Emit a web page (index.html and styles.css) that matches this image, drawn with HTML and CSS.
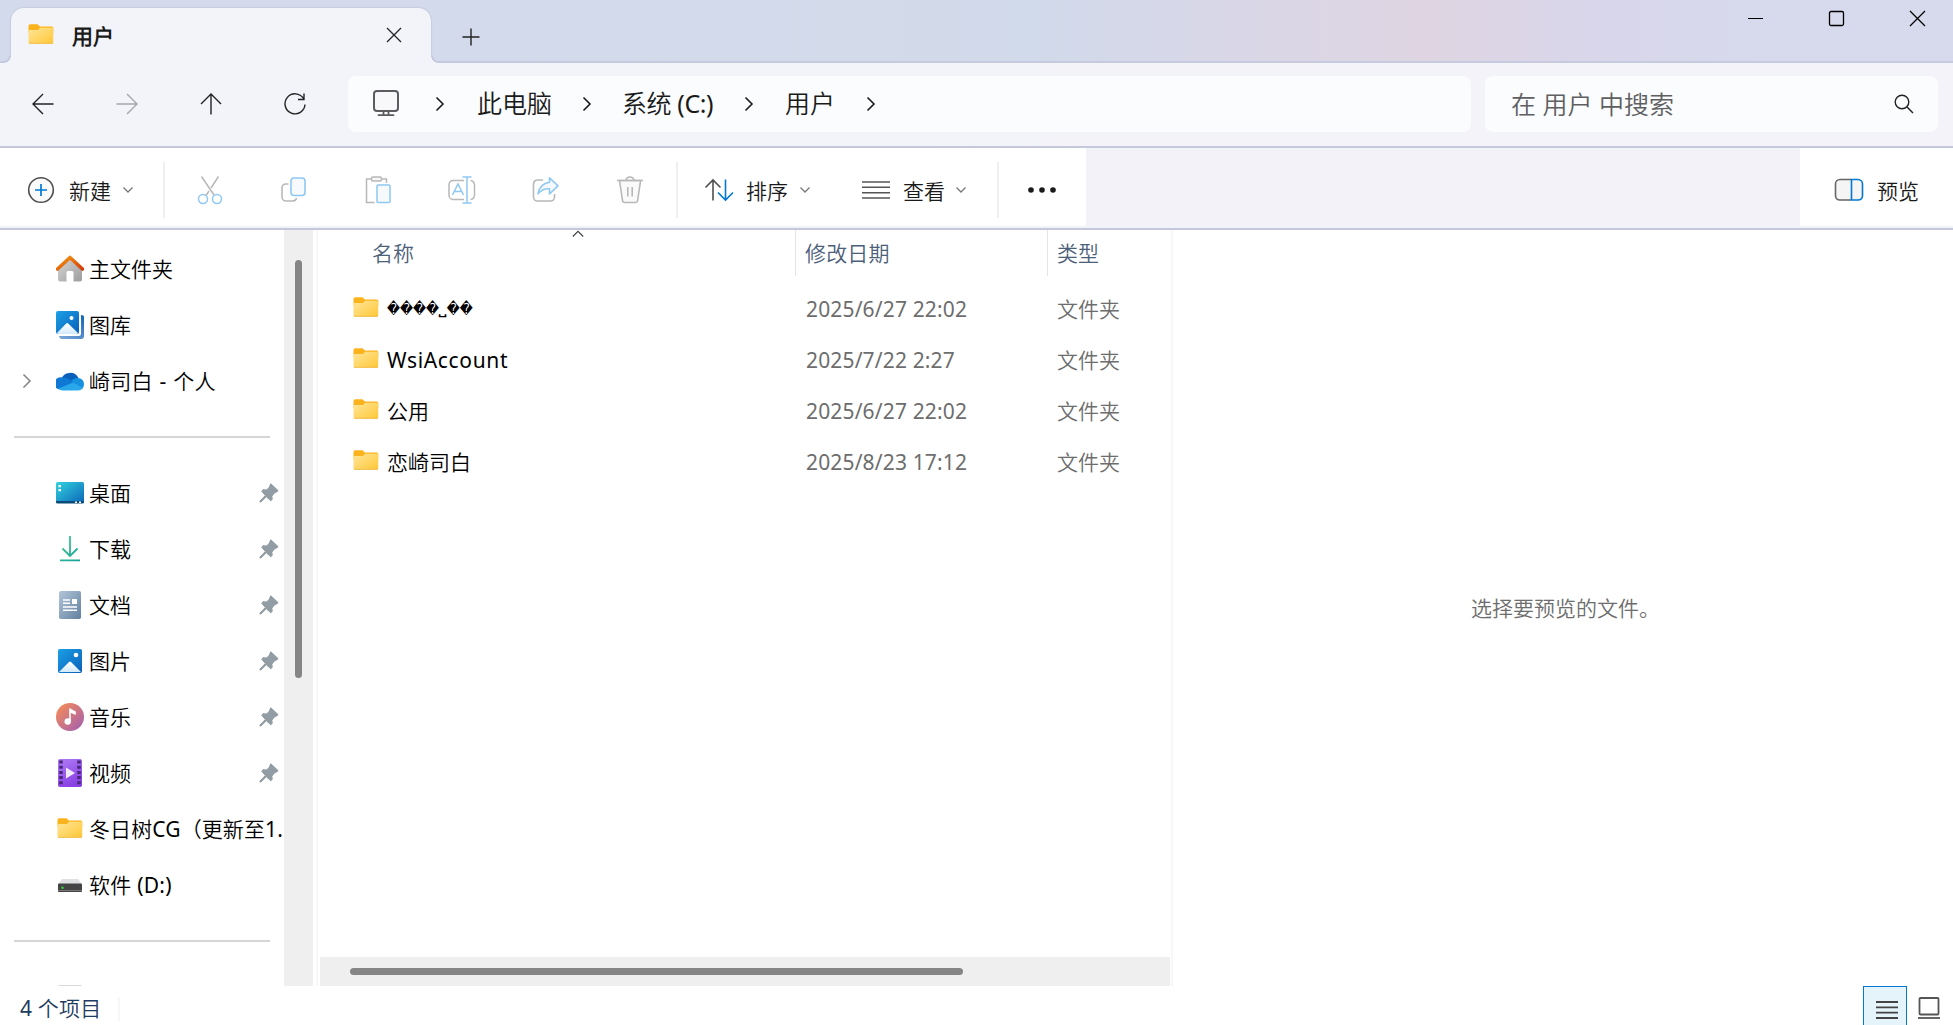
FILE: index.html
```html
<!DOCTYPE html>
<html lang="zh-CN">
<head>
    <meta charset="UTF-8">
    <meta name="viewport" content="width=device-width, initial-scale=1.0">
    <title>用户</title>
    <link rel="stylesheet" href="styles.css">
</head>
<body>
    <!-- Shared icons -->
    <svg class="defs" width="0" height="0">
        <defs>
            <linearGradient id="g-folder" x1="0" y1="0" x2="1" y2="1">
                <stop offset="0" stop-color="#ffe69a"/><stop offset="1" stop-color="#ffc736"/>
            </linearGradient>
            <linearGradient id="g-roof" x1="0" y1="0" x2="1" y2="1">
                <stop offset="0" stop-color="#f59a13"/><stop offset="1" stop-color="#d43c0a"/>
            </linearGradient>
            <linearGradient id="g-wall" x1="0" y1="0" x2="1" y2="1">
                <stop offset="0" stop-color="#d8d8d8"/><stop offset="1" stop-color="#9c9c9c"/>
            </linearGradient>
            <linearGradient id="g-photo" x1="0" y1="0" x2="1" y2="1">
                <stop offset="0" stop-color="#1ba0e6"/><stop offset="1" stop-color="#0a5fb8"/>
            </linearGradient>
            <linearGradient id="g-hill" x1="0" y1="0" x2="0" y2="1">
                <stop offset="0" stop-color="#ffffff"/><stop offset="1" stop-color="#d3e9fb"/>
            </linearGradient>
            <linearGradient id="g-back" x1="0" y1="1" x2="1" y2="0">
                <stop offset="0" stop-color="#7da7d8"/><stop offset="0.6" stop-color="#4a86c8"/><stop offset="1" stop-color="#0b62b4"/>
            </linearGradient>
            <linearGradient id="g-desktop" x1="0" y1="0" x2="1" y2="1">
                <stop offset="0" stop-color="#32d3de"/><stop offset="1" stop-color="#0c66b8"/>
            </linearGradient>
            <linearGradient id="g-down" gradientUnits="userSpaceOnUse" x1="0" y1="0" x2="28" y2="28">
                <stop offset="0" stop-color="#4fd08f"/><stop offset="1" stop-color="#0b9b98"/>
            </linearGradient>
            <linearGradient id="g-doc" x1="0" y1="0" x2="1" y2="1">
                <stop offset="0" stop-color="#b3c6da"/><stop offset="1" stop-color="#61809f"/>
            </linearGradient>
            <linearGradient id="g-music" x1="0" y1="0" x2="1" y2="1">
                <stop offset="0.1" stop-color="#f28b5b"/><stop offset="1" stop-color="#a05cb4"/>
            </linearGradient>
            <linearGradient id="g-video" x1="0" y1="0" x2="0.4" y2="1">
                <stop offset="0" stop-color="#b07cf5"/><stop offset="1" stop-color="#8a41e4"/>
            </linearGradient>
            <symbol id="i-folder" viewBox="0 0 26 22">
                <path d="M.5 3a1.8 1.8 0 0 1 1.8-1.8h7.2l2.4 2.2h11.8a1.6 1.6 0 0 1 1.6 1.6v5H.5z" fill="#fbb31d"/>
                <path d="M.5 7h8.7q.8 0 1.3-.5l1.7-1.700h13v14.4a1.6 1.6 0 0 1-1.6 1.6H2.1a1.6 1.6 0 0 1-1.6-1.6z" fill="url(#g-folder)"/>
                <path d="M1 20.3h24" stroke="#f0b848" stroke-width=".8"/>
            </symbol>
            <symbol id="i-pin" viewBox="0 0 20 20">
                <path d="M11.8.8l7.3 6.8-.6.9-2.8 1.2-2.8 3.4.3 3.4-1.5 1.2-4.4-4-5.4 5.2-1 .1.1-1 5.3-5.5-3.5-4.2 1.1-1.6 3.7.3 2.5-2.6z" fill="#919ca4" stroke="#919ca4" stroke-linejoin="round"/>
            </symbol>
            <symbol id="i-down" viewBox="0 0 12 8">
                <path d="M1.5 1.5L6 6l4.500-4.500" fill="none" stroke="#777" stroke-width="1.3"/>
            </symbol>
            <symbol id="i-right" viewBox="0 0 10 16">
                <path d="M1.500 1.500L8 8l-6.500 6.500" fill="none" stroke="currentColor" stroke-width="1.6"/>
            </symbol>
        </defs>
    </svg>

    <div class="window">
        <!-- Title bar -->
        <div class="titlebar">
            <div class="tab">
                <svg class="folder" width="26" height="22"><use href="#i-folder"/></svg>
                <span class="tab-title">用户</span>
                <svg class="tab-close" width="16" height="16" viewBox="0 0 16 16"><path d="M1 1l14 14M15 1L1 15" stroke="#222" stroke-width="1.3"/></svg>
            </div>
            <svg class="tab-new" width="18" height="18" viewBox="0 0 18 18"><path d="M9 .5v17M.5 9h17" stroke="#222" stroke-width="1.400"/></svg>
            <div class="window-buttons">
                <svg width="17" height="17" viewBox="0 0 17 17"><path d="M1 8.500h15" stroke="#000"/></svg>
                <svg width="17" height="17" viewBox="0 0 17 17"><rect x="1.500" y="1.500" width="14" height="14" rx="1.500" fill="none" stroke="#000" stroke-width="1.300"/></svg>
                <svg width="17" height="17" viewBox="0 0 17 17"><path d="M1 1l15 15M16 1L1 16" stroke="#000" stroke-width="1.300"/></svg>
            </div>
        </div>

        <!-- Navigation and address -->
        <div class="navbar">
            <div class="nav-button"><svg width="24" height="24" viewBox="0 0 24 24"><path d="M22.500 12H2M12 2L2 12l10 10" fill="none" stroke="#222" stroke-width="1.400"/></svg></div>
            <div class="nav-button"><svg width="24" height="24" viewBox="0 0 24 24"><path d="M1.500 12H22M12 2l10 10-10 10" fill="none" stroke="#a5a6aa" stroke-width="1.400"/></svg></div>
            <div class="nav-button"><svg width="24" height="24" viewBox="0 0 24 24"><path d="M12 22.500V2M2 12L12 2l10 10" fill="none" stroke="#222" stroke-width="1.400"/></svg></div>
            <div class="nav-button"><svg width="24" height="24" viewBox="0 0 24 24"><path d="M20.500 6.500A10 10 0 1 0 22 12.500M21 1.500v6h-6" fill="none" stroke="#222" stroke-width="1.400"/></svg></div>
            <div class="address">
                <svg class="pc" width="28" height="28" viewBox="0 0 28 28"><rect x="2" y="2" width="24" height="20" rx="3" fill="#f8f8fa" stroke="#5c5c60" stroke-width="2"/><path d="M11.500 22v4M16.500 22v4M6.500 26.200h15" stroke="#5c5c60" stroke-width="1.800" stroke-linecap="round"/></svg>
                <svg class="sep" width="10" height="16"><use href="#i-right"/></svg>
                <span class="crumb crumb-pc">此电脑</span>
                <svg class="sep" width="10" height="16"><use href="#i-right"/></svg>
                <span class="crumb crumb-disk">系统 (C:)</span>
                <svg class="sep" width="10" height="16"><use href="#i-right"/></svg>
                <span class="crumb crumb-user">用户</span>
                <svg class="sep" width="10" height="16"><use href="#i-right"/></svg>
            </div>
            <div class="search">
                <span>在 用户 中搜索</span>
                <svg width="20" height="20" viewBox="0 0 20 20"><circle cx="8" cy="8" r="6.800" fill="none" stroke="#222" stroke-width="1.400"/><path d="M12.800 12.800L19 19" stroke="#222" stroke-width="1.500"/></svg>
            </div>
        </div>

        <!-- Commands -->
        <div class="toolbar">
            <div class="commands">
                <div class="command command-new">
                    <svg width="28" height="28" viewBox="0 0 28 28"><circle cx="14" cy="14" r="12.300" fill="#fafafa" stroke="#505050" stroke-width="1.600"/><path d="M14 8v12M8 14h12" stroke="#0078d4" stroke-width="1.700"/></svg>
                    <span>新建</span>
                    <svg width="12" height="8"><use href="#i-down"/></svg>
                </div>
                <div class="command-icons">
                    <svg width="30" height="30" viewBox="0 0 30 30" fill="none" stroke-width="1.500"><path d="M6.500 1.500L19 20M23.500 1.500L16 13M14 16l-3 4.500" stroke="#b8b8b8"/><circle cx="8" cy="24" r="4.500" stroke="#8fc8f2"/><circle cx="22" cy="24" r="4.500" stroke="#8fc8f2"/></svg>
                    <svg width="30" height="30" viewBox="0 0 30 30" fill="none" stroke-width="1.600"><path d="M9.500 9H7a4 4 0 0 0-4 4v9a4 4 0 0 0 4 4h6q4 0 4.500-3" stroke="#b8b8b8"/><rect x="12" y="3" width="14" height="17.500" rx="3" fill="#f7fafd" stroke="#8fc8f2"/></svg>
                    <svg width="30" height="30" viewBox="0 0 30 30" fill="none" stroke-width="1.500"><path d="M8 4H3.500v23.500h8M18 4h5.500v4" stroke="#b8b8b8"/><rect x="8.500" y="2" width="10" height="4" rx="1.500" fill="#f7f7f7" stroke="#b8b8b8"/><rect x="14" y="10" width="13" height="17.500" rx="1" fill="#f7fafd" stroke="#8fc8f2"/></svg>
                    <svg width="30" height="30" viewBox="0 0 30 30" fill="none" stroke-width="1.500"><path d="M17 5.500H6a4 4 0 0 0-4 4v11a4 4 0 0 0 4 4h11M23.500 5.500a4.500 4.500 0 0 1 4 4v11a4.500 4.500 0 0 1-4 4" stroke="#b8b8b8"/><path d="M5.500 20L11 9l5.500 11M7.500 16.500h7M20 2v26M15.500 2h9M15.500 28h9" stroke="#8fc8f2"/></svg>
                    <svg width="30" height="30" viewBox="0 0 30 30" fill="none" stroke-width="1.600"><path d="M12 5H6.500a4 4 0 0 0-4 4v13a4 4 0 0 0 4 4h13a4 4 0 0 0 4-4v-3" stroke="#b8b8b8"/><path d="M18.500 2.800l8.500 8-8.500 8v-5q-7-.500-11.500 5 1.500-10 11.500-11.500z" fill="#f5f9fd" stroke="#8fc8f2" stroke-linejoin="round"/></svg>
                    <svg width="30" height="30" viewBox="0 0 30 30" fill="none" stroke="#b8b8b8" stroke-width="1.600"><path d="M4.500 5.500l3 20q.3 2 2.300 2h10.500q2 0 2.300-2l3-20z" fill="#fafafa"/><path d="M2 5.500h26M11 5.500q.5-3.500 4-3.500t4 3.500M12.800 12v9.500M17.200 12v9.500"/></svg>
                </div>
                <div class="command command-sort">
                    <svg width="30" height="26" viewBox="0 0 30 26" fill="none" stroke-width="1.600"><path d="M9 23.500V3M1.500 10.500L9 3l7.500 7.500" stroke="#505050"/><path d="M21.500 2.500V23M14 15.500l7.500 7.500 7.500-7.500" stroke="#0078d4"/></svg>
                    <span>排序</span>
                    <svg width="12" height="8"><use href="#i-down"/></svg>
                </div>
                <div class="command command-view">
                    <svg width="28" height="20" viewBox="0 0 28 20"><path d="M0 2h28M0 7.300h28M0 12.700h28M0 18h28" stroke="#555" stroke-width="1.500"/></svg>
                    <span>查看</span>
                    <svg width="12" height="8"><use href="#i-down"/></svg>
                </div>
                <div class="command command-more">
                    <svg width="28" height="6" viewBox="0 0 28 6" fill="#1a1a1a"><circle cx="3" cy="3" r="2.800"/><circle cx="14" cy="3" r="2.800"/><circle cx="25" cy="3" r="2.800"/></svg>
                </div>
            </div>
            <div class="preview-toggle">
                <svg width="30" height="24" viewBox="0 0 30 24" fill="#f5f5f5" stroke-width="1.600"><path d="M17 1.500H6a4.500 4.500 0 0 0-4.500 4.500v12A4.500 4.500 0 0 0 6 22h11" stroke="#666"/><path d="M17.500 1.500H24A4.500 4.500 0 0 1 28.500 6v12a4.500 4.500 0 0 1-4.500 4h-6.500z" stroke="#0078d4"/></svg>
                <span>预览</span>
            </div>
        </div>

        <!-- Main area -->
        <div class="main">
            <div class="sidebar">
                <div class="side-item">
                    <svg class="side-icon" viewBox="0 0 28 28"><path d="M2 13L14 3l12 10v11.500a2 2 0 0 1-2 2h-6.500v-9a1.500 1.500 0 0 0-1.500-1.500h-4a1.500 1.500 0 0 0-1.500 1.500v9H4a2 2 0 0 1-2-2z" fill="url(#g-wall)"/><path d="M1.500 14L14 2.500 26.500 14" fill="none" stroke="url(#g-roof)" stroke-width="3.600" stroke-linejoin="round" stroke-linecap="round"/></svg>
                    <span>主文件夹</span>
                </div>
                <div class="side-item">
                    <svg class="side-icon" viewBox="0 0 28 28"><path d="M25 4q3 0 3 2v19a3 3 0 0 1-3 3H6q-2.500 0-3-3h19.500a2.500 2.500 0 0 0 2.500-2.500z" fill="url(#g-back)"/><rect width="23" height="23" rx="2" fill="url(#g-photo)"/><path d="M1 22l9.200-9.500q1-1 2 0L22 22q-.500 1-1.500 1H2.500q-1 0-1.500-1z" fill="url(#g-hill)"/><circle cx="15.500" cy="7" r="2" fill="#fff"/></svg>
                    <span>图库</span>
                </div>
                <div class="side-item">
                    <svg class="side-expand" width="10" height="16"><use href="#i-right"/></svg>
                    <svg class="side-icon" viewBox="0 0 28 28"><path d="M5 12.500A9.500 9.500 0 0 1 22.500 11l-5 7z" fill="#0a5fbb"/><path d="M6 10.500q4-.500 7 1.500l7 5L3 22.500A6 6 0 0 1 6 10.500z" fill="#0f78d4"/><path d="M15 14q3-3.500 7-3a6 6 0 0 1 6 6q0 3-2 5z" fill="#1490df"/><path d="M2.500 21.500L17 15.500l10 5.500a6 6 0 0 1-4.500 2.500H6.500q-2.500 0-4-2z" fill="#28a8ea"/></svg>
                    <span class="account">崎司白 - 个人</span>
                </div>
                <div class="side-rule"></div>
                <div class="side-item">
                    <svg class="side-icon" viewBox="0 0 28 28"><rect y="3" width="28" height="21" rx="1.500" fill="url(#g-desktop)"/><path d="M0 22h28v1a1.500 1.500 0 0 1-1.500 1.500h-25A1.500 1.500 0 0 1 0 23z" fill="#0b4a7a"/><path d="M2.500 6h2.500v2.200H2.500zM2.500 10h2.500v2.200H2.500zM19 22.500h2v1.500h-2zM23 22.500h2v1.500h-2z" fill="#fff"/></svg>
                    <span>桌面</span>
                    <svg class="pin" width="20" height="20"><use href="#i-pin"/></svg>
                </div>
                <div class="side-item">
                    <svg class="side-icon" viewBox="0 0 28 28"><path d="M14 1v20M6.500 13.500L14 21l7.500-7.500M4 25.300h20" fill="none" stroke="url(#g-down)" stroke-width="1.800"/></svg>
                    <span>下载</span>
                    <svg class="pin" width="20" height="20"><use href="#i-pin"/></svg>
                </div>
                <div class="side-item">
                    <svg class="side-icon" viewBox="0 0 28 28"><rect x="3" width="22" height="28" rx="1.800" fill="url(#g-doc)"/><path d="M7 9h7M7 12.300h7M7 16h14M7 19.300h14" stroke="#fff" stroke-width="1.600"/><path d="M16 8h5v5h-5z" fill="#fff"/></svg>
                    <span>文档</span>
                    <svg class="pin" width="20" height="20"><use href="#i-pin"/></svg>
                </div>
                <div class="side-item">
                    <svg class="side-icon" viewBox="0 0 28 28"><rect x="2" y="2" width="24" height="24" rx="1.800" fill="url(#g-photo)"/><path d="M3 25l10-10q1-1 2 0l10 10z" fill="url(#g-hill)"/><circle cx="20" cy="8" r="2.300" fill="#fff"/></svg>
                    <span>图片</span>
                    <svg class="pin" width="20" height="20"><use href="#i-pin"/></svg>
                </div>
                <div class="side-item">
                    <svg class="side-icon" viewBox="0 0 28 28"><circle cx="14" cy="14" r="14" fill="url(#g-music)"/><path d="M14 5.500v13" stroke="#fff" stroke-width="1.600"/><path d="M14 5.500l5.800 3v3.500L14 9.500z" fill="#fff"/><circle cx="11.700" cy="18.500" r="3.200" fill="#fff"/></svg>
                    <span>音乐</span>
                    <svg class="pin" width="20" height="20"><use href="#i-pin"/></svg>
                </div>
                <div class="side-item">
                    <svg class="side-icon" viewBox="0 0 28 28"><rect x="2" width="24" height="28" rx="1.800" fill="url(#g-video)"/><path d="M5 1.500v26M23 1.500v26" stroke="#482a78" stroke-width="3.600" stroke-dasharray="3 2.200"/><path d="M10 8.500l9 5.500-9 5.500z" fill="#f1eaf8"/></svg>
                    <span>视频</span>
                    <svg class="pin" width="20" height="20"><use href="#i-pin"/></svg>
                </div>
                <div class="side-item">
                    <svg class="folder side-folder" width="26" height="22"><use href="#i-folder"/></svg>
                    <span class="clipped">冬日树CG（更新至1.</span>
                </div>
                <div class="side-item">
                    <svg class="side-icon" viewBox="0 0 28 28"><path d="M6 8h16l4 5.500H2z" fill="#dfe0e2"/><rect x="2" y="12.500" width="24" height="8.500" rx=".8" fill="#444"/><path d="M2 19.500h24" stroke="#777"/><circle cx="6.500" cy="16.800" r="1.300" fill="#2fd22f"/></svg>
                    <span class="drive">软件 (D:)</span>
                </div>
                <div class="side-rule"></div>
                <div class="side-item">
                    <svg class="side-icon" viewBox="0 0 28 28"><rect x="2" y="2" width="24" height="20" rx="1" fill="#d9dade"/></svg>
                </div>
            </div>
            <div class="side-scroll"><div class="side-thumb"></div></div>

            <div class="files">
                <svg class="sort-mark" width="12" height="8" viewBox="0 0 12 8"><path d="M.8 6.500L6 1.300l5.200 5.200" fill="none" stroke="#444" stroke-width="1.200"/></svg>
                <div class="file-row file-head">
                    <span class="col-name">名称</span>
                    <span class="col-date">修改日期</span>
                    <span class="col-type">类型</span>
                </div>
                <div class="file-row">
                    <div class="col-name"><svg class="folder" width="26" height="22"><use href="#i-folder"/></svg><span class="broken">����<i>˽</i>��</span></div>
                    <span class="col-date">2025/6/27 22:02</span>
                    <span class="col-type">文件夹</span>
                </div>
                <div class="file-row">
                    <div class="col-name"><svg class="folder" width="26" height="22"><use href="#i-folder"/></svg><span class="latin">WsiAccount</span></div>
                    <span class="col-date">2025/7/22 2:27</span>
                    <span class="col-type">文件夹</span>
                </div>
                <div class="file-row">
                    <div class="col-name"><svg class="folder" width="26" height="22"><use href="#i-folder"/></svg><span>公用</span></div>
                    <span class="col-date">2025/6/27 22:02</span>
                    <span class="col-type">文件夹</span>
                </div>
                <div class="file-row">
                    <div class="col-name"><svg class="folder" width="26" height="22"><use href="#i-folder"/></svg><span>恋崎司白</span></div>
                    <span class="col-date">2025/8/23 17:12</span>
                    <span class="col-type">文件夹</span>
                </div>
                <div class="file-scroll"><div class="file-thumb"></div></div>
            </div>

            <div class="preview">选择要预览的文件。</div>
        </div>

        <!-- Status bar -->
        <div class="statusbar">
            <span class="count">4 个项目</span>
            <div class="view-active"><svg width="22" height="20" viewBox="0 0 22 20"><path d="M0 2h22M0 7.300h22M0 12.600h22M0 18h22" stroke="#444" stroke-width="1.800"/></svg></div>
            <svg class="view-large" width="22" height="24" viewBox="0 0 22 24"><rect x="1.500" y="2" width="19" height="16.500" rx="1" fill="none" stroke="#555" stroke-width="1.800"/><path d="M0 22h22" stroke="#555" stroke-width="1.800"/></svg>
        </div>
    </div>
</body>
</html>
```
FILE: styles.css
```css
* {
    box-sizing: border-box;
}
body {
    margin: 0;
    height: 100vh;
    overflow: hidden;
    font-family: "Noto Sans", "Noto Sans CJK SC DemiLight", "Noto Sans CJK SC Light", "Noto Sans CJK SC", sans-serif;
    font-size: 21px;
    line-height: 30px;
    color: #000;
    background-color: #fff;
}
svg {
    display: block;
    flex: none;
}
span {
    white-space: nowrap;
}
.defs {
    position: absolute;
}
.window {
    display: flex;
    flex-direction: column;
    width: 100%;
    height: 100%;
}

/* Title bar */
.titlebar {
    display: flex;
    align-items: flex-start;
    height: 63px;
    padding-left: 11px;
    background: linear-gradient(90deg, #d3daec 0%, #d3daea 45%, #d1daea 53%, #d8d7e8 62%, #dfd5e2 73%, #d9d6ea 81%, #d7d9ec 90%);
    box-shadow: inset 0 -2px 0 #c5cade;
}
.tab {
    position: relative;
    display: flex;
    align-items: center;
    width: 420px;
    height: 55px;
    margin-top: 8px;
    padding: 0 29px 0 17px;
    border-radius: 13px 13px 0 0;
    background-color: #f2f4f9;
    box-shadow: 0 0 1px 1px #c8cde0;
    clip-path: inset(-2px -10px 0 -11px);
}
/* curved feet of the tab */
.tab::before,
.tab::after {
    content: "";
    position: absolute;
    bottom: 0;
    width: 7px;
    height: 7px;
}
.tab::before {
    left: -7px;
    background: radial-gradient(circle at 0 0, #d3daec 4.5px, #c5cade 5px, #c5cade 6.5px, #f2f4f9 7px);
}
.tab::after {
    right: -7px;
    background: radial-gradient(circle at 100% 0, #d3daec 4.5px, #c5cade 5px, #c5cade 6.5px, #f2f4f9 7px);
}
.tab .folder {
    margin-top: -3px;
}
.tab-title {
    margin-left: 18px;
    margin-top: 1px;
    font-weight: bold;
    color: #1a1a1a;
}
.tab-close {
    margin-left: auto;
    margin-top: -1px;
}
.tab-new {
    margin: 28px 0 0 31px;
}
.window-buttons {
    display: flex;
    gap: 64px;
    margin: 10px 27px 0 auto;
}

/* Navigation */
.navbar {
    display: flex;
    align-items: center;
    height: 85px;
    padding: 0 15px 3px 1px;
    background: linear-gradient(90deg, #f2f4f9, #f2f4f9 45%, #f4f3f8 60%, #f3f3f9);
    box-shadow: inset 0 -2px 0 #c5c8da;
    font-size: 25px;
}
.nav-button {
    display: flex;
    justify-content: center;
    width: 84px;
}
.address,
.search {
    display: flex;
    align-items: center;
    height: 56px;
    border-radius: 8px;
    background-color: #fbfcfe;
}
.address {
    width: 1123px;
    margin-left: 11px;
    padding-left: 24px;
    color: #1a1a1a;
}
.pc {
    margin-right: 35px;
    margin-top: -2px;
}
.crumb-pc {
    width: 75px;
    margin: -3px 30px 0 32px;
}
.crumb-disk {
    width: 92px;
    margin: -3px 30px 0 30px;
    letter-spacing: -0.4px;
}
.crumb-user {
    width: 51px;
    margin: -3px 30px 0 31px;
}
.search {
    flex: 1;
    justify-content: space-between;
    margin-left: 14px;
    padding: 0 24px 0 26px;
    color: #5f5f61;
}

/* Commands */
.toolbar {
    display: flex;
    justify-content: space-between;
    height: 82px;
    padding-bottom: 4px;
    background-color: #f3f2f8;
    box-shadow: inset 0 -2px 0 #c5c8da;
    color: #1a1a1a;
}
.commands {
    display: flex;
    align-items: center;
    width: 1086px;
    background-color: #fff;
}
.command {
    display: flex;
    align-items: center;
    height: 56px;
    margin-top: 6px;
}
.command span {
    margin: 1px 10px 0 15px;
}
.command-new {
    width: 165px;
    padding-left: 27px;
    border-right: 2px solid #efefef;
}
.command-new > svg:first-child {
    margin-top: -1px;
}
.command-new span {
    margin-left: 14px;
    margin-right: 11px;
}
.command-icons {
    display: flex;
    gap: 54px;
    width: 513px;
    height: 56px;
    margin-top: 6px;
    padding: 13px 0 0 30px;
    border-right: 2px solid #efefef;
}
.command-sort {
    padding-left: 26px;
}
.command-sort span {
    margin-left: 12px;
    margin-right: 11px;
}
.command-view {
    width: 188px;
    padding-left: 51px;
    border-right: 2px solid #efefef;
}
.command-view span {
    margin-left: 13px;
}
.command-more {
    padding-left: 29px;
}
.preview-toggle {
    display: flex;
    align-items: center;
    width: 153px;
    padding: 6px 0 0 34px;
    background-color: #fff;
}
.preview-toggle span {
    margin: 2px 0 0 13px;
}

/* Main area */
.main {
    display: flex;
    height: 756px;
    overflow: hidden;
}
.sidebar {
    width: 284px;
    height: 756px;
    padding-top: 11px;
    overflow: hidden;
}
.side-item {
    display: flex;
    align-items: center;
    height: 56px;
    padding: 0 5px 0 56px;
}
.side-item span {
    margin-left: 5px;
    margin-top: -1px;
}
.side-icon {
    width: 28px;
    height: 28px;
}
.side-folder {
    margin: -2px 1px 0 1px;
}
.side-expand {
    margin-left: -34px;
    margin-right: 24px;
    color: #888;
}
.account {
    letter-spacing: 0.3px;
    word-spacing: 0.9px;
}
.clipped {
    letter-spacing: 0.1px;
}
.drive {
    letter-spacing: 0.25px;
}
.pin {
    margin-left: auto;
}
.side-rule {
    height: 56px;
    margin: 0 14px;
    background: linear-gradient(#d6d6d6, #d6d6d6) no-repeat 0 27px / 100% 2px;
}
.side-scroll {
    width: 29px;
    padding: 30px 0 0 11px;
    background-color: #efefef;
}
.side-thumb {
    width: 7px;
    height: 418px;
    border-radius: 4px;
    background-color: #858585;
}

/* File list */
.files {
    position: relative;
    display: flex;
    flex-direction: column;
    width: 857px;
    margin-left: 3px;
    border-left: 2px solid #f7f7f7;
    border-right: 2px solid #f7f7f7;
}
.sort-mark {
    position: absolute;
    left: 254px;
    top: 0;
}
.file-row {
    display: flex;
    align-items: center;
    height: 51px;
    color: #6d6d6d;
}
.file-head {
    align-items: stretch;
    height: 46px;
    margin-bottom: 7px;
    line-height: 46px;
    color: #4c607a;
}
.col-name {
    display: flex;
    align-items: center;
    width: 477px;
    padding-left: 35px;
    color: #000;
}
.col-name span {
    margin-left: 8px;
}
.col-name .folder {
    margin-top: -3px;
}
.file-head .col-name {
    padding-left: 54px;
    color: #4c607a;
}
.col-date {
    width: 252px;
    padding-left: 11px;
    letter-spacing: 0.150px;
}
.col-type {
    padding-left: 10px;
}
.file-head .col-date,
.file-head .col-type {
    border-left: 1px solid #e5e5e5;
}
.file-head .col-date {
    padding-left: 9px;
}
.file-head .col-type {
    padding-left: 9px;
}
.latin {
    letter-spacing: 0.650px;
}
.broken {
    font-family: "DejaVu Sans", sans-serif;
    font-size: 12.700px;
    transform: scaleY(1.2);
}
.broken i {
    display: inline-block;
    font-style: normal;
    font-weight: bold;
    transform: scaleX(1.6);
    margin: 0 1.3px;
}
.file-scroll {
    height: 29px;
    margin: auto 1px 0 2px;
    padding: 11px 0 0 30px;
    background-color: #efefef;
}
.file-thumb {
    width: 613px;
    height: 7px;
    border-radius: 4px;
    background-color: #858585;
}
.preview {
    display: flex;
    flex: 1;
    align-items: center;
    justify-content: center;
    padding-left: 5px;
    color: #6d6d6d;
}

/* Status bar */
.statusbar {
    display: flex;
    height: 39px;
    color: #1f3c60;
}
.count {
    width: 120px;
    height: 24px;
    margin: 11px auto 0 0;
    padding-left: 20px;
    line-height: 22px;
    letter-spacing: 0.2px;
    border-right: 2px solid #f7f7f7;
}
.view-active {
    width: 44px;
    height: 45px;
    padding: 13px 0 0 12px;
    border: 1px solid #0078d4;
    background-color: #e5f3fb;
}
.view-large {
    margin: 10px 13px 0 11px;
}
```
